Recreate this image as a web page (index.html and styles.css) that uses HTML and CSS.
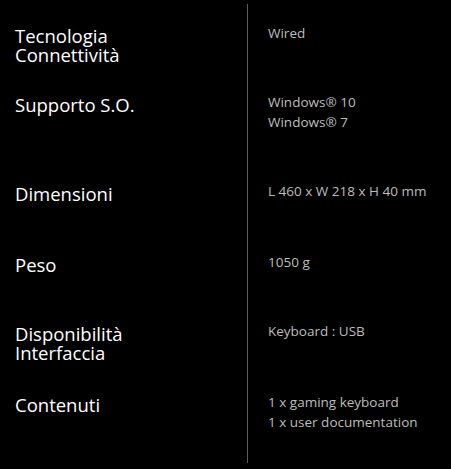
FILE: index.html
```html
<!DOCTYPE html>
<html lang="it">
<head>
<meta charset="utf-8">
<title>Specifiche</title>
<link rel="stylesheet" href="styles.css">
</head>
<body>
<div class="specs">
  <div class="row h69">
    <div class="label">Tecnologia<br>Connettività</div>
    <div class="value">Wired</div>
  </div>
  <div class="row h89">
    <div class="label">Supporto S.O.</div>
    <div class="value">Windows® 10<br>Windows® 7</div>
  </div>
  <div class="row h71">
    <div class="label">Dimensioni</div>
    <div class="value">L 460 x W 218 x H 40 mm</div>
  </div>
  <div class="row h69">
    <div class="label">Peso</div>
    <div class="value">1050 g</div>
  </div>
  <div class="row h71">
    <div class="label">Disponibilità<br>Interfaccia</div>
    <div class="value">Keyboard : USB</div>
  </div>
  <div class="row h90">
    <div class="label">Contenuti</div>
    <div class="value">1 x gaming keyboard<br>1 x user documentation</div>
  </div>
</div>
</body>
</html>
```
FILE: styles.css
```css
html, body {
  margin: 0;
  padding: 0;
  background: #000;
}
body {
  height: 469px;
  overflow: hidden;
}
.specs {
  padding-top: 4px;
  display: flex;
  flex-direction: column;
}
.row {
  display: flex;
}
.h69 { height: 69px; }
.h71 { height: 71px; }
.h89 { height: 89px; }
.h90 { height: 90px; }
.label {
  width: 232px;
  flex: none;
  padding: 22px 0 0 15px;
  font-family: "Open Sans", "Noto Sans", sans-serif;
  font-size: 18.5px;
  line-height: 19px;
  color: #fff;
}
.value {
  flex: 1;
  border-left: 1px solid #5c5c5c;
  padding: 19px 0 0 20px;
  font-family: "Open Sans", "Noto Sans", sans-serif;
  font-size: 13.5px;
  line-height: 20px;
  color: #bdbdbd;
}
```
